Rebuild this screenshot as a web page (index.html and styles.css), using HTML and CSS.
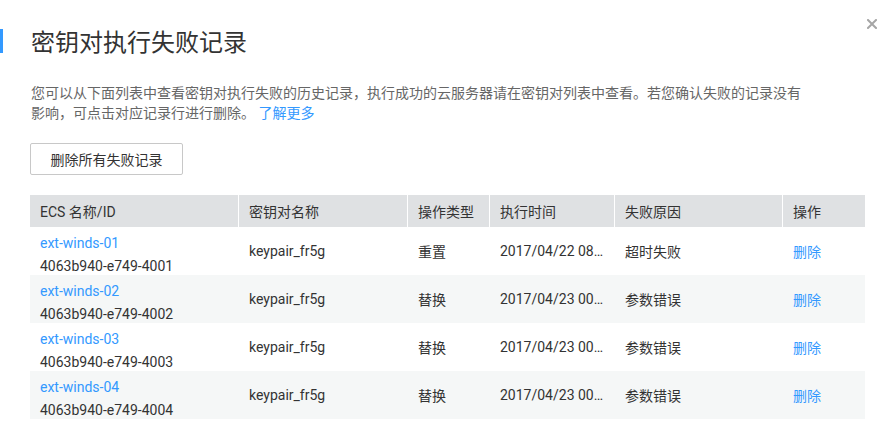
FILE: index.html
```html
<!DOCTYPE html>
<html lang="zh-CN">
<head>
<meta charset="utf-8">
<title>密钥对执行失败记录</title>
<link rel="stylesheet" href="styles.css">
</head>
<body>
<div class="dialog">
  <button class="close" aria-label="关闭">
    <svg width="10" height="10" viewBox="0 0 10 10"><path d="M1 1L9 9M9 1L1 9" stroke="#a6a6a6" stroke-width="2" stroke-linecap="square"/></svg>
  </button>
  <div class="head">
    <span class="bar"></span>
    <h1 class="title">密钥对执行失败记录</h1>
  </div>
  <div class="body">
    <p class="desc">您可以从下面列表中查看密钥对执行失败的历史记录，执行成功的云服务器请在密钥对列表中查看。若您确认失败的记录没有影响，可点击对应记录行进行删除。 <a class="link" href="#">了解更多</a></p>
    <button class="btn">删除所有失败记录</button>
    <table class="grid">
      <colgroup>
        <col class="c1"><col class="c2"><col class="c3"><col class="c4"><col class="c5"><col class="c6">
      </colgroup>
      <thead>
        <tr><th>ECS 名称/ID</th><th>密钥对名称</th><th>操作类型</th><th>执行时间</th><th>失败原因</th><th>操作</th></tr>
      </thead>
      <tbody>
        <tr>
          <td><div class="name"><a class="link" href="#">ext-winds-01</a><span>4063b940-e749-4001</span></div></td>
          <td>keypair_fr5g</td><td>重置</td><td class="ell">2017/04/22 08:32:15 GMT+08:00</td><td>超时失败</td><td><a class="link" href="#">删除</a></td>
        </tr>
        <tr>
          <td><div class="name"><a class="link" href="#">ext-winds-02</a><span>4063b940-e749-4002</span></div></td>
          <td>keypair_fr5g</td><td>替换</td><td class="ell">2017/04/23 00:12:45 GMT+08:00</td><td>参数错误</td><td><a class="link" href="#">删除</a></td>
        </tr>
        <tr>
          <td><div class="name"><a class="link" href="#">ext-winds-03</a><span>4063b940-e749-4003</span></div></td>
          <td>keypair_fr5g</td><td>替换</td><td class="ell">2017/04/23 00:13:05 GMT+08:00</td><td>参数错误</td><td><a class="link" href="#">删除</a></td>
        </tr>
        <tr>
          <td><div class="name"><a class="link" href="#">ext-winds-04</a><span>4063b940-e749-4004</span></div></td>
          <td>keypair_fr5g</td><td>替换</td><td class="ell">2017/04/23 00:13:27 GMT+08:00</td><td>参数错误</td><td><a class="link" href="#">删除</a></td>
        </tr>
      </tbody>
    </table>
  </div>
</div>
</body>
</html>
```
FILE: styles.css
```css
* { box-sizing: border-box; }
html, body { margin: 0; padding: 0; background: #fff; }
body {
  font-family: Roboto, "Noto Sans CJK SC", sans-serif;
  font-size: 14px;
  color: #333;
}
.dialog {
  position: relative;
  width: 890px;
  height: 422px;
  overflow: hidden;
}
.close {
  position: absolute;
  left: 867px;
  top: 19px;
  width: 10px;
  height: 10px;
  padding: 0;
  border: 0;
  background: none;
  display: block;
}
.close svg { display: block; }
.head {
  display: flex;
  align-items: center;
  padding-top: 29px;
  gap: 28px;
}
.bar {
  width: 3px;
  height: 24px;
  background: #3399ff;
}
.title {
  margin: 0;
  font-size: 24px;
  line-height: 24px;
  font-weight: normal;
  color: #333;
  font-family: "Noto Sans CJK SC", sans-serif;
}
.body {
  padding: 0 25px 0 30px;
}
.desc {
  margin: 30px 0 0 1px;
  max-width: 780px;
  line-height: 20px;
  color: #666;
}
.link {
  color: #3399ff;
  text-decoration: none;
}
.btn {
  display: block;
  margin-top: 20px;
  width: 153px;
  height: 32px;
  padding: 0;
  border: 1px solid #c8c8c8;
  border-radius: 2px;
  background: #fff;
  font-family: Roboto, "Noto Sans CJK SC", sans-serif;
  font-size: 14px;
  color: #333;
}
.grid {
  margin-top: 20px;
  width: 835px;
  table-layout: fixed;
  border-collapse: separate;
  border-spacing: 0;
}
.c1 { width: 209px; }
.c2 { width: 169px; }
.c3 { width: 82px; }
.c4 { width: 125px; }
.c5 { width: 168px; }
.c6 { width: 82px; }
.grid th {
  height: 32px;
  padding: 0 10px;
  background: #dfe1e3;
  font-weight: normal;
  text-align: left;
  color: #333;
  border-right: 1px solid #fff;
  white-space: nowrap;
}
.grid th:last-child { border-right: 0; }
.grid td {
  height: 48px;
  padding: 0 10px;
  vertical-align: middle;
  white-space: nowrap;
}
.grid tbody tr:nth-child(even) td { background: #f5f7f7; }
.ell {
  overflow: hidden;
  text-overflow: ellipsis;
}
.grid td:first-child { vertical-align: top; }
.name {
  height: 48px;
  padding-top: 5px;
  display: flex;
  flex-direction: column;
  line-height: 23px;
}
```
